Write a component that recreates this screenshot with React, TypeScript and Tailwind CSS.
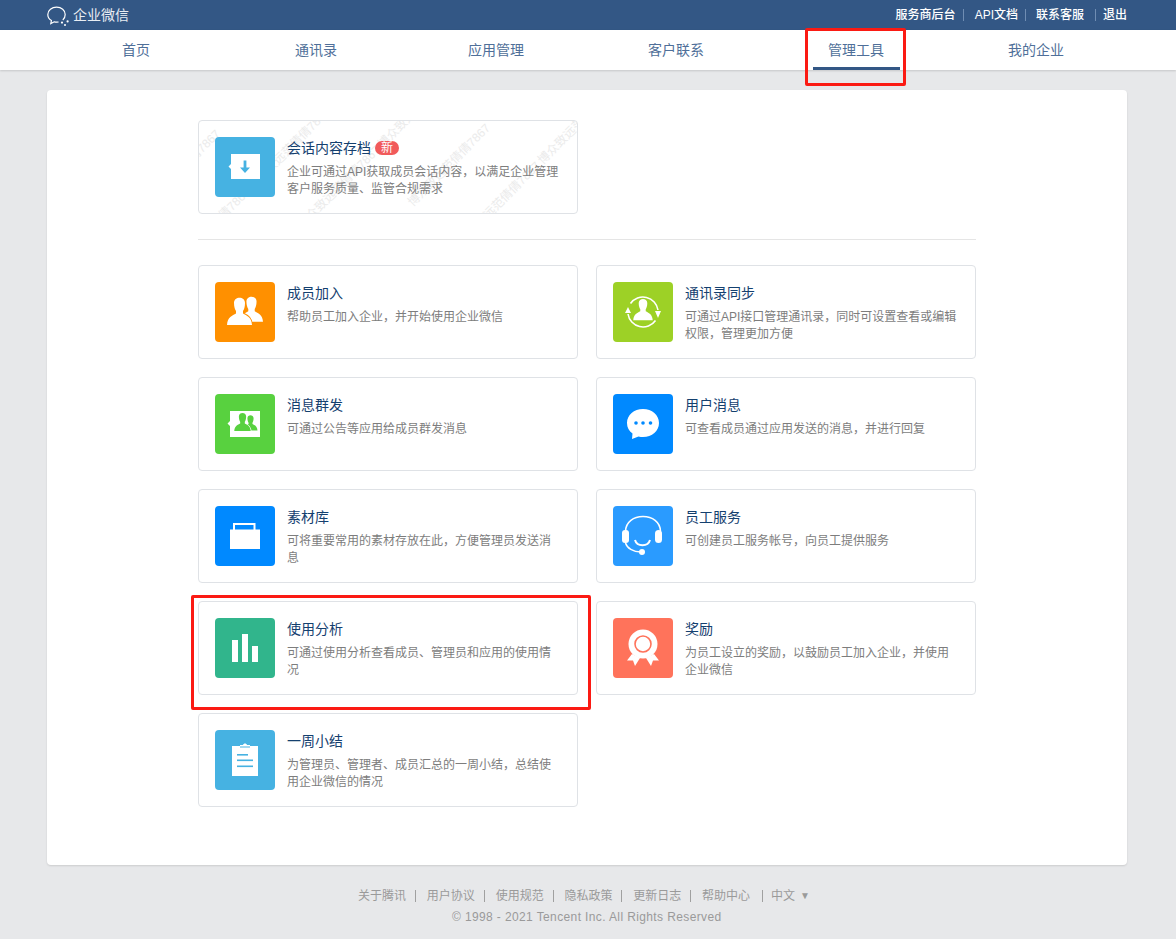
import type { ReactNode } from 'react';

const Person = ({ x, y, s, fill, stroke }: { x: number; y: number; s: number; fill: string; stroke?: string }) => (
  <g transform={`translate(${x} ${y}) scale(${s})`} fill={fill} stroke={stroke} strokeWidth={stroke ? 2 : 0} paintOrder="stroke">
    <path d="M-5.5 -14 C-5.5 -21 5.5 -21 5.5 -14 C5.5 -10 4.5 -7.5 3.5 -6 L3.5 -3.5 C7 -1.5 12 0 12.5 8 L-12.5 8 C-12 0 -7 -1.5 -3.5 -3.5 L-3.5 -6 C-4.5 -7.5 -5.5 -10 -5.5 -14 Z" />
  </g>
);

const IconBox = ({ bg, children }: { bg: string; children: ReactNode }) => (
  <div className={`h-[60px] w-[60px] shrink-0 rounded-[4px] ${bg}`}>
    <svg viewBox="0 0 60 60" className="h-[60px] w-[60px]">
      {children}
    </svg>
  </div>
);

const icons: Record<string, ReactNode> = {
  archive: (
    <IconBox bg="bg-[#46b2e2]">
      <path d="M16 17H45V42H16V32L13.5 29.5L16 27Z" fill="#fff" />
      <path d="M28.6 23.5H31.4V30.5H35L30 36L25 30.5H28.6Z" fill="#46b2e2" />
    </IconBox>
  ),
  members: (
    <IconBox bg="bg-[#ff9000]">
      <Person x={36.5} y={32.5} s={0.92} fill="#fff" />
      <Person x={24.5} y={35} s={1} fill="#fff" stroke="#ff9000" />
    </IconBox>
  ),
  sync: (
    <IconBox bg="bg-[#9dd126]">
      <path d="M17.5 21.5A15.2 15.2 0 0 1 45 28" fill="none" stroke="#fff" strokeWidth="1.6" />
      <path d="M42.5 38.5A15.2 15.2 0 0 1 15 32" fill="none" stroke="#fff" strokeWidth="1.6" />
      <path d="M12 31L15 25L18 31Z M42 29L45 36L48 29Z" fill="#fff" />
      <Person x={30} y={32} s={0.78} fill="#fff" />
    </IconBox>
  ),
  broadcast: (
    <IconBox bg="bg-[#58d13f]">
      <path d="M15 17H45V43H15V32L12.5 29.5L15 27Z" fill="#fff" />
      <Person x={35.5} y={32} s={0.56} fill="#58d13f" />
      <Person x={27.5} y={31.7} s={0.66} fill="#58d13f" stroke="#fff" />
    </IconBox>
  ),
  chat: (
    <IconBox bg="bg-[#0089ff]">
      <path d="M30 15C21 15 14 21 14 29C14 33.5 16 37 19.5 39.5L19 45L25.5 42.4C27 42.8 28.5 43 30 43C39 43 46 37 46 29C46 21 39 15 30 15Z" fill="#fff" />
      <circle cx="23" cy="29" r="1.8" fill="#0089ff" />
      <circle cx="30" cy="29" r="1.8" fill="#0089ff" />
      <circle cx="37.5" cy="29" r="1.8" fill="#0089ff" />
    </IconBox>
  ),
  briefcase: (
    <IconBox bg="bg-[#0089ff]">
      <rect x="19" y="18" width="20.5" height="7" fill="none" stroke="#fff" strokeWidth="2" />
      <rect x="15" y="23.5" width="30" height="19.5" fill="#fff" />
    </IconBox>
  ),
  headset: (
    <IconBox bg="bg-[#2a9bff]">
      <path d="M12.5 25C13 16 20.5 10.5 30 10.5C39.5 10.5 47 16 47.5 25" fill="none" stroke="#fff" strokeWidth="1.5" />
      <rect x="9" y="24" width="7" height="13" rx="3" fill="#fff" />
      <rect x="42" y="24" width="7" height="13" rx="3.5" fill="#fff" />
      <path d="M22 34C24 41 35 41 37 34" fill="none" stroke="#fff" strokeWidth="2" />
      <path d="M12.5 37C14 42 20 46 28 46" fill="none" stroke="#fff" strokeWidth="1.5" />
      <circle cx="29" cy="46" r="3" fill="#fff" />
    </IconBox>
  ),
  bars: (
    <IconBox bg="bg-[#31b58c]">
      <rect x="17" y="22" width="6" height="22" fill="#fff" />
      <rect x="27" y="16" width="6" height="28" fill="#fff" />
      <rect x="37" y="28" width="6" height="16" fill="#fff" />
    </IconBox>
  ),
  award: (
    <IconBox bg="bg-[#ff735b]">
      <path d="M19 36L14 42.5L20 42.5L22 48L27 40Z M41 36L46 42.5L40 42.5L38 48L33 40Z" fill="#fff" />
      <circle cx="30" cy="26" r="14.5" fill="#fff" />
      <circle cx="30" cy="26" r="8" fill="#fff" stroke="#ff735b" strokeWidth="1.6" />
    </IconBox>
  ),
  clipboard: (
    <IconBox bg="bg-[#46b2e2]">
      <rect x="17" y="16" width="26" height="30" fill="#fff" />
      <path d="M25 16V15H28C28.5 13 31.5 13 32 15H35V16Z" fill="#fff" />
      <rect x="25" y="16.5" width="10" height="1" fill="#46b2e2" />
      <rect x="22" y="24" width="11" height="1.6" fill="#46b2e2" />
      <rect x="22" y="29.5" width="16" height="1.6" fill="#46b2e2" />
      <rect x="22" y="35.5" width="16" height="1.6" fill="#46b2e2" />
    </IconBox>
  ),
};

const Card = ({ icon, title, desc, badge, mark }: { icon: string; title: string; desc: ReactNode; badge?: boolean; mark?: boolean }) => (
  <div className="relative flex h-[94px] w-[380px] gap-3 overflow-hidden rounded-[4px] border border-[#dfe2e6] bg-white pl-4 pt-4">
    {mark && <Watermark />}
    <div className="relative">{icons[icon]}</div>
    <div className="relative w-[275px] pt-px">
      <div className="flex h-5 items-center gap-1 text-sm leading-5 text-[#14406f]">
        {title}
        {badge && (
          <span className="flex h-[14px] w-6 items-center justify-center rounded-full bg-[#f15a5a] text-xs text-white">新</span>
        )}
      </div>
      <p className="mt-[6px] text-xs leading-[17px] text-[#7d7d7d]">{desc}</p>
    </div>
  </div>
);

// diagonal tiles: x + y is constant along a row of the watermark
const markTiles = [30, 118, 206, 294, 382, 470].flatMap((sum, row) =>
  [0, 1, 2, 3, 4, 5].map((k) => {
    const x = k * 80 - 20 + (row % 2) * 30;
    return { x, y: sum - x };
  }),
).filter((t) => t.y > -20 && t.y < 114 && t.x < 400);

const Watermark = () => (
  <>
    {markTiles.map((t) => (
      <span
        key={`${t.x}-${t.y}`}
        className="absolute -translate-x-1/2 -translate-y-1/2 -rotate-45 whitespace-nowrap text-xs text-[#ebebeb]"
        style={{ left: t.x, top: t.y }}
      >
        博众致远范倩倩7867
      </span>
    ))}
  </>
);

const navItems = ['首页', '通讯录', '应用管理', '客户联系', '管理工具', '我的企业'];

const topLinks = [
  { label: '服务商后台', sep: 'ml-[7px] mr-[11px]' },
  { label: 'API文档', sep: 'ml-[7px] mr-[10px]' },
  { label: '联系客服', sep: 'ml-[11px] mr-[7px]' },
];

const footerLinks = ['关于腾讯', '用户协议', '使用规范', '隐私政策', '更新日志'];

export default function App() {
  return (
    <div className="relative h-[939px] w-[1176px] overflow-hidden bg-[#e7e8ea] font-['Liberation_Sans','Noto_Sans_CJK_SC',sans-serif]">
      <header className="flex h-[30px] items-center justify-between bg-[#335785] pl-[47px] pr-[49px] text-white">
        <div className="flex items-center gap-[3px] text-sm text-[#e8edf3]">
          <svg viewBox="0 0 23 22" className="h-[22px] w-[23px]">
            <path d="M15.8 16C17.4 14.6 18.2 12.8 18.2 10.5C18.2 6.2 14.4 3.2 9.6 3.2C4.8 3.2 0.8 6.2 0.8 10.5C0.8 13.2 2.2 15.2 4.4 16.6L3.8 19.6L7.2 17.8C8.4 18.1 10 18.2 11.6 18" fill="none" stroke="#fff" strokeWidth="1.2" />
            <circle cx="15" cy="18.6" r="1.1" fill="#fff" />
            <circle cx="20.6" cy="17.4" r="1.1" fill="#fff" />
            <circle cx="18" cy="21" r="1" fill="#fff" />
          </svg>
          <span className="mt-[-1px]">企业微信</span>
        </div>
        <div className="flex items-center text-xs font-medium">
          {topLinks.map((l) => (
            <div key={l.label} className="flex items-center">
              <span>{l.label}</span>
              <i className={`h-3 w-px bg-[#6f8db3] ${l.sep}`} />
            </div>
          ))}
          <span>退出</span>
        </div>
      </header>

      <nav className="relative flex h-10 bg-white pl-[46px] shadow-[0_1px_2px_rgba(0,0,0,0.15)]">
        {navItems.map((item, i) => (
          <div key={item} className="relative flex h-10 w-[180px] items-center justify-center text-sm text-[#4f6f99]">
            {item}
            {i === 4 && <span className="absolute bottom-0 left-[47px] h-[3px] w-[87px] bg-[#335785]" />}
          </div>
        ))}
      </nav>

      <main className="ml-[47px] mt-5 w-[1080px] rounded-[4px] bg-white pb-[58px] pl-[151px] pt-[30px] shadow-[0_1px_2px_rgba(0,0,0,0.12)]">
        <Card
          mark
          badge
          icon="archive"
          title="会话内容存档"
          desc={<>企业可通过API获取成员会话内容，以满足企业管理<br />客户服务质量、监管合规需求</>}
        />
        <div className="my-[25px] h-px w-[778px] bg-[#e5e5e5]" />
        <div className="grid w-[778px] grid-cols-[380px_380px] gap-[18px]">
          <Card icon="members" title="成员加入" desc="帮助员工加入企业，并开始使用企业微信" />
          <Card icon="sync" title="通讯录同步" desc={<>可通过API接口管理通讯录，同时可设置查看或编辑<br />权限，管理更加方便</>} />
          <Card icon="broadcast" title="消息群发" desc="可通过公告等应用给成员群发消息" />
          <Card icon="chat" title="用户消息" desc="可查看成员通过应用发送的消息，并进行回复" />
          <Card icon="briefcase" title="素材库" desc={<>可将重要常用的素材存放在此，方便管理员发送消<br />息</>} />
          <Card icon="headset" title="员工服务" desc="可创建员工服务帐号，向员工提供服务" />
          <Card icon="bars" title="使用分析" desc={<>可通过使用分析查看成员、管理员和应用的使用情<br />况</>} />
          <Card icon="award" title="奖励" desc={<>为员工设立的奖励，以鼓励员工加入企业，并使用<br />企业微信</>} />
          <Card icon="clipboard" title="一周小结" desc={<>为管理员、管理者、成员汇总的一周小结，总结使<br />用企业微信的情况</>} />
        </div>
      </main>

      <footer className="pl-[358px] pt-[22px] text-xs text-[#9a9a9a]">
        <div className="flex h-[18px] items-center">
          {footerLinks.map((l) => (
            <div key={l} className="flex items-center">
              <span>{l}</span>
              <i className="ml-[9px] mr-[10.8px] h-3 w-px bg-[#a0a0a0]" />
            </div>
          ))}
          <span>帮助中心</span>
          <i className="ml-3 mr-2 h-3 w-px bg-[#a0a0a0]" />
          <span>中文</span>
          <span className="ml-[5px] text-[10px]">▼</span>
        </div>
        <div className="mt-[3px] pl-[94px] text-xs leading-[18px] tracking-[0.38px]">© 1998 - 2021 Tencent Inc. All Rights Reserved</div>
      </footer>

      {/* red annotation boxes drawn over the screenshot */}
      <div className="absolute left-[805px] top-[28px] h-[58px] w-[101px] rounded-[2px] border-[3px] border-[#fb1a13]" />
      <div className="absolute left-[191px] top-[595px] h-[115px] w-[400px] rounded-[2px] border-[3px] border-[#fb1a13]" />
    </div>
  );
}
